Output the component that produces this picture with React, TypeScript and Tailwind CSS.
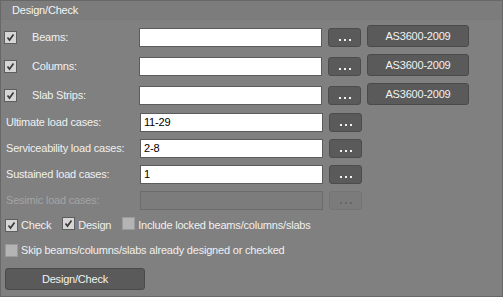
import type { ReactNode } from "react";

type BoxProps = { checked?: boolean };

function CheckBox({ checked = false }: BoxProps) {
  return (
    <span
      className={`inline-flex h-[13px] w-[13px] shrink-0 items-center justify-center border ${
        checked ? "border-[#5e5e5e] bg-[#d6d6d6]" : "border-[#9a9a9a] bg-[#b4b4b4]"
      }`}
    >
      {checked ? (
        <svg width="11" height="11" viewBox="0 0 11 11">
          <polyline points="2.5,5.5 4.5,8 8.5,2.5" fill="none" stroke="#3a3a3a" strokeWidth="1.7" />
        </svg>
      ) : null}
    </span>
  );
}

function DotsButton({ disabled = false }: { disabled?: boolean }) {
  return (
    <button
      type="button"
      className={`ml-[6px] flex h-[19px] w-[33px] items-end justify-center gap-[3px] rounded-[3px] border pb-[5px] ${
        disabled ? "border-[#747474] bg-[#7b7b7b]" : "border-[#4c4c4c] bg-[#5a5a5a]"
      }`}
    >
      {[0, 1, 2].map((i) => (
        <span key={i} className={`h-[2px] w-[2px] ${disabled ? "bg-[#666]" : "bg-[#f2f2f2]"}`} />
      ))}
    </button>
  );
}

function TextBox({ value = "", disabled = false }: { value?: string; disabled?: boolean }) {
  return (
    <div
      className={`flex h-[19px] w-[183px] items-center border px-[3px] text-[11px] text-black ${
        disabled ? "border-[#6c6c6c] bg-[#7c7c7c]" : "border-[#5c5c5c] bg-white"
      }`}
    >
      {value}
    </div>
  );
}

function Row({ label, children, disabled = false }: { label: ReactNode; children: ReactNode; disabled?: boolean }) {
  return (
    <div className="flex h-[19px] items-center pl-[5px]">
      <span className={`w-[134px] ${disabled ? "text-[#a4a4a4]" : "text-[#f0f0f0]"}`}>{label}</span>
      {children}
    </div>
  );
}

const members = ["Beams:", "Columns:", "Slab Strips:"];
const loads = [
  { label: "Ultimate load cases:", value: "11-29" },
  { label: "Serviceability load cases:", value: "2-8" },
  { label: "Sustained load cases:", value: "1" },
];

export default function App() {
  return (
    <div className="h-[297px] w-[503px] border border-[#686868] bg-[#808080] font-['Liberation_Sans',Arial,sans-serif] text-[11px] tracking-[-0.2px] text-[#f0f0f0]">
      <div className="flex h-[19px] items-center border-b border-[#7a7a7a] bg-[#7c7c7c] pl-[11px] text-[#f4f4f4]">
        Design/Check
      </div>

      <div className="mt-[5px] flex flex-col gap-[7px]">
        {members.map((m) => (
          <div key={m} className="flex h-[22px] items-end pl-[3px]">
            <div className="flex h-[19px] items-center">
              <CheckBox checked />
              <span className="ml-[15px] w-[107px]">{m}</span>
            </div>
            <TextBox />
            <DotsButton />
            <button
              type="button"
              className="ml-[6px] h-[22px] w-[102px] rounded-[3px] border border-[#4a4a4a] bg-[#5a5a5a] text-[11px] text-[#f2f2f2]"
            >
              AS3600-2009
            </button>
          </div>
        ))}
      </div>

      <div className="mt-[8px] flex flex-col gap-[7px]">
        {loads.map((l) => (
          <Row key={l.label} label={l.label}>
            <TextBox value={l.value} />
            <DotsButton />
          </Row>
        ))}
        <Row label="Sesimic load cases:" disabled>
          <TextBox disabled />
          <DotsButton disabled />
        </Row>
      </div>

      <div className="mt-[9px] flex h-[13px] items-center pl-[4px]">
        <CheckBox checked />
        <span className="ml-[3px]">Check</span>
        <span className="ml-[11px]">
          <CheckBox checked />
        </span>
        <span className="ml-[3px]">Design</span>
        <span className="ml-[11px]">
          <CheckBox />
        </span>
        <span className="ml-[3px]">Include locked beams/columns/slabs</span>
      </div>

      <div className="mt-[12px] flex h-[13px] items-center pl-[4px]">
        <CheckBox />
        <span className="ml-[3px]">Skip beams/columns/slabs already designed or checked</span>
      </div>

      <button
        type="button"
        className="ml-[4px] mt-[11px] h-[22px] w-[140px] rounded-[3px] border border-[#4a4a4a] bg-[#5a5a5a] text-[11px] text-[#f2f2f2]"
      >
        Design/Check
      </button>
    </div>
  );
}
